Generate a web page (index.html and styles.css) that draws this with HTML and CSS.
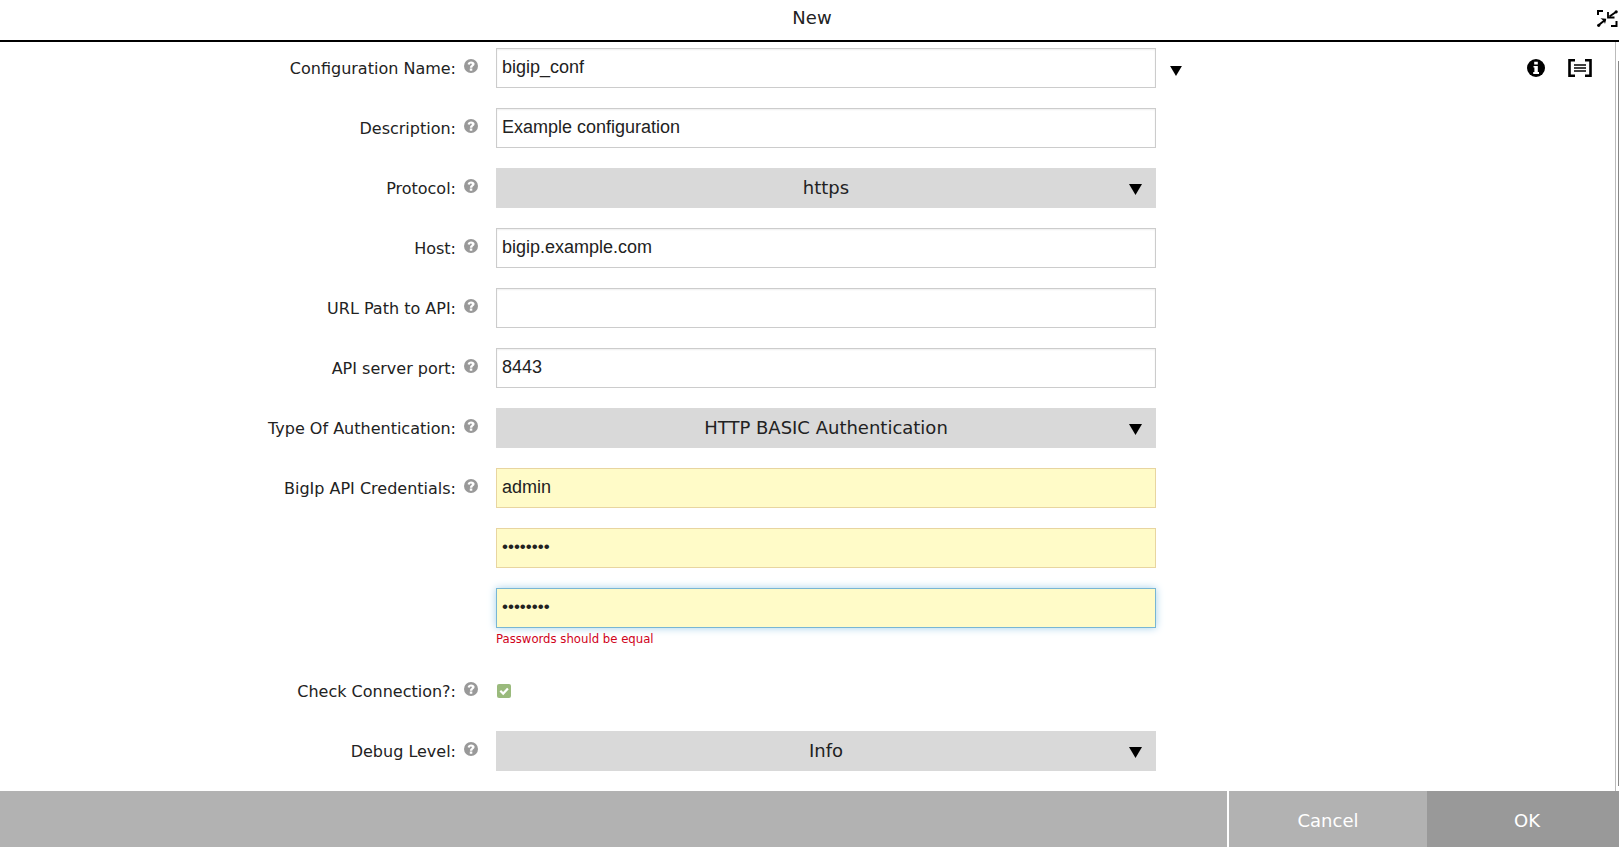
FILE: index.html
```html
<!DOCTYPE html>
<html lang="en">
<head>
<meta charset="utf-8">
<meta name="viewport" content="width=device-width, initial-scale=1">
<title>New</title>
<link rel="stylesheet" href="styles.css">
</head>
<body>
<svg class="sprite" aria-hidden="true">
  <symbol id="help" viewBox="0 0 14 14">
    <circle cx="7" cy="7" r="7" fill="#999"/>
    <path d="M3.600 5.200C3.900 3.200 5.400 2.400 7.100 2.400c2 0 3.500 1 3.500 2.700 0 2.100-2.300 2.100-2.300 3.600H5.900c0-2.200 2-2.400 2-3.400 0-.5-.4-.8-.9-.8-.7 0-1.100.4-1.300 1.200zM5.800 9.500h2.500v2.200H5.800z" fill="#fff"/>
  </symbol>
  <symbol id="arrow" viewBox="0 0 13 11"><path d="M0 0h13L6.500 11z"/></symbol>
</svg>
<form class="dialog">
  <header class="header">
    <h1 class="title">New</h1>
    <button class="icon-button" type="button" aria-label="Collapse">
      <svg width="21" height="17" viewBox="0 0 21 17">
        <path d="M1 5V1H6M14 16h5.500V11" fill="none" stroke="#000" stroke-width="2"/>
        <path d="M1.500 15.300L8 10M19.300 1.700L12.500 6.500" fill="none" stroke="#000" stroke-width="2"/>
        <path d="M3.500 8.300L9.300 8.700L8 14L6.800 11z"/>
        <path d="M11 2v5.500h6.500" fill="none" stroke="#000" stroke-width="1.800"/>
        <circle cx="1.700" cy="15.300" r="1.600"/><circle cx="19.200" cy="1.800" r="1.600"/>
      </svg>
    </button>
  </header>

  <div class="body">
    <main class="fields">
      <div class="row">
        <div class="caption"><label for="name">Configuration Name:</label><svg class="help"><use href="#help"/></svg></div>
        <input class="text" id="name" type="text" value="bigip_conf">
        <div class="tools">
          <button class="icon-button picker" type="button" aria-label="Choose configuration"><svg class="small-arrow"><use href="#arrow"/></svg></button>
          <div class="tool-group">
            <button class="icon-button" type="button" aria-label="Information">
              <svg width="18" height="18" viewBox="0 0 18 18"><circle cx="9" cy="9" r="9"/><path d="M7.200 2.800h3.600v2.700H7.200zM6.500 7h4.300v6h1.200v2H6.200v-2h1.200V8.500h-.9z" fill="#fff"/></svg>
            </button>
            <button class="icon-button" type="button" aria-label="Expression">
              <svg width="24" height="18" viewBox="0 0 24 18"><path d="M7 1.200H1.500v15.600H7M17 1.200h5.500v15.600H17" fill="none" stroke="#000" stroke-width="2.600"/><path d="M6 6h12M6 9h12M6 12h12" stroke="#000" stroke-width="1.600"/></svg>
            </button>
          </div>
        </div>
      </div>
      <div class="row">
        <div class="caption"><label for="description">Description:</label><svg class="help"><use href="#help"/></svg></div>
        <input class="text" id="description" type="text" value="Example configuration">
      </div>
      <div class="row">
        <div class="caption"><label for="protocol">Protocol:</label><svg class="help"><use href="#help"/></svg></div>
        <div class="choice"><select id="protocol"><option>https</option></select><svg class="arrow"><use href="#arrow"/></svg></div>
      </div>
      <div class="row">
        <div class="caption"><label for="host">Host:</label><svg class="help"><use href="#help"/></svg></div>
        <input class="text" id="host" type="text" value="bigip.example.com">
      </div>
      <div class="row">
        <div class="caption"><label for="path">URL Path to API:</label><svg class="help"><use href="#help"/></svg></div>
        <input class="text" id="path" type="text">
      </div>
      <div class="row">
        <div class="caption"><label for="port">API server port:</label><svg class="help"><use href="#help"/></svg></div>
        <input class="text" id="port" type="text" value="8443">
      </div>
      <div class="row">
        <div class="caption"><label for="auth">Type Of Authentication:</label><svg class="help"><use href="#help"/></svg></div>
        <div class="choice"><select id="auth"><option>HTTP BASIC Authentication</option></select><svg class="arrow"><use href="#arrow"/></svg></div>
      </div>
      <div class="row">
        <div class="caption"><label for="user">BigIp API Credentials:</label><svg class="help"><use href="#help"/></svg></div>
        <div class="credentials">
          <input class="text filled" id="user" type="text" value="admin">
          <input class="text filled secret" type="password" value="password" aria-label="Password">
          <div>
            <input class="text filled secret active" type="password" value="passw0rd" aria-label="Repeat password" aria-describedby="mismatch">
            <p class="error" id="mismatch">Passwords should be equal</p>
          </div>
        </div>
      </div>
      <div class="row">
        <div class="caption"><label for="check">Check Connection?:</label><svg class="help"><use href="#help"/></svg></div>
        <div class="check"><input id="check" type="checkbox" checked><svg class="tick" viewBox="0 0 14 14"><path d="M3.300 6.800L6.200 9.600L10.900 4.600" fill="none" stroke="#fff" stroke-width="2.200"/></svg></div>
      </div>
      <div class="row">
        <div class="caption"><label for="debug">Debug Level:</label><svg class="help"><use href="#help"/></svg></div>
        <div class="choice"><select id="debug"><option>Info</option></select><svg class="arrow"><use href="#arrow"/></svg></div>
      </div>
    </main>
    <div class="scrollbar"><div class="thumb"></div></div>
  </div>

  <footer class="footer">
    <button class="action cancel" type="button">Cancel</button>
    <button class="action ok" type="submit">OK</button>
  </footer>
</form>
</body>
</html>
```

FILE: styles.css
```css
* { box-sizing: border-box; }

body {
  margin: 0;
  background: #fff;
  color: #222;
  font: 16px "DejaVu Sans", sans-serif;
}

.sprite { display: none; }

svg { display: block; flex: none; }

.dialog {
  display: flex;
  flex-direction: column;
  min-height: 100vh;
}

.header {
  display: grid;
  grid-template-columns: 1fr auto 1fr;
  align-items: center;
  height: 42px;
  padding: 0 1px 3px 6px;
  border-bottom: 2px solid #000;
}

.title {
  grid-column: 2;
  margin: 0;
  padding-bottom: 3px;
  font-size: 18px;
  font-weight: 400;
}

.header .icon-button { justify-self: end; }

.icon-button {
  padding: 0;
  border: 0;
  background: none;
}

.body {
  display: flex;
  flex: 1;
}

.fields {
  display: flex;
  flex: 1;
  flex-direction: column;
  gap: 20px;
  padding: 6px 0 20px;
}

.row {
  display: grid;
  grid-template-columns: 482fr 660fr 445fr;
  column-gap: 14px;
}

.caption {
  display: flex;
  justify-content: flex-end;
  gap: 8px;
  height: 40px;
  padding-right: 4px;
  line-height: 42px;
}

.help {
  width: 14px;
  height: 14px;
  margin-top: 11px;
}

.text {
  display: block;
  width: 100%;
  height: 40px;
  padding: 0 5px 2px;
  border: 1px solid #ccc;
  background: #fff;
  box-shadow: inset 0 1px 2px #eee;
  color: #222;
  font: 18px "Liberation Sans", sans-serif;
  outline: 0;
}

.filled {
  border-color: #e8d5a0;
  background: #fffbc8;
  box-shadow: none;
}

.secret { font-size: 17px; }

.active {
  border-color: #78b6d4;
  box-shadow: 0 0 8px #a6d0ea;
}

.credentials {
  display: grid;
  gap: 20px;
}

.error {
  margin: 0;
  padding: 1px 0 2px;
  color: #d0021b;
  font: 13px/20px "DejaVu Sans Condensed", "DejaVu Sans", sans-serif;
}

.choice { position: relative; }

.choice select {
  display: block;
  width: 100%;
  height: 40px;
  padding: 0 0 2px;
  border: 0;
  border-radius: 0;
  appearance: none;
  background: #d9d9d9;
  color: #222;
  font: 18px "DejaVu Sans", sans-serif;
  text-align: center;
  text-align-last: center;
}

.arrow {
  position: absolute;
  top: 16px;
  right: 14px;
  width: 13px;
  height: 11px;
  pointer-events: none;
}

.picker { padding-top: 5px; }

.small-arrow {
  width: 12px;
  height: 10px;
}

.tools {
  display: flex;
  align-items: center;
  justify-content: space-between;
  padding-right: 23px;
}

.tool-group {
  display: flex;
  gap: 23px;
}

.check {
  position: relative;
  width: 14px;
  height: 14px;
  margin: 13px 1px;
}

.check input {
  display: block;
  width: 14px;
  height: 14px;
  margin: 0;
  border-radius: 2px;
  appearance: none;
  background: #9aba7c;
}

.tick {
  position: absolute;
  inset: 0;
  pointer-events: none;
}

.scrollbar {
  width: 4px;
  padding: 19px 0 5px 2px;
  border-left: 1px solid #bbb;
}

.thumb {
  height: 100%;
  background: #888;
}

.footer {
  display: flex;
  justify-content: flex-end;
  height: 56px;
  background: #b2b2b2;
}

.action {
  border: 0;
  color: #fff;
  font: 18px "DejaVu Sans", sans-serif;
}

.cancel {
  width: 200px;
  padding: 2px 0 0;
  border-left: 2px solid #fff;
  background: #b2b2b2;
}

.ok {
  width: 192px;
  padding: 2px 0 0 8px;
  background: #999;
}
```
